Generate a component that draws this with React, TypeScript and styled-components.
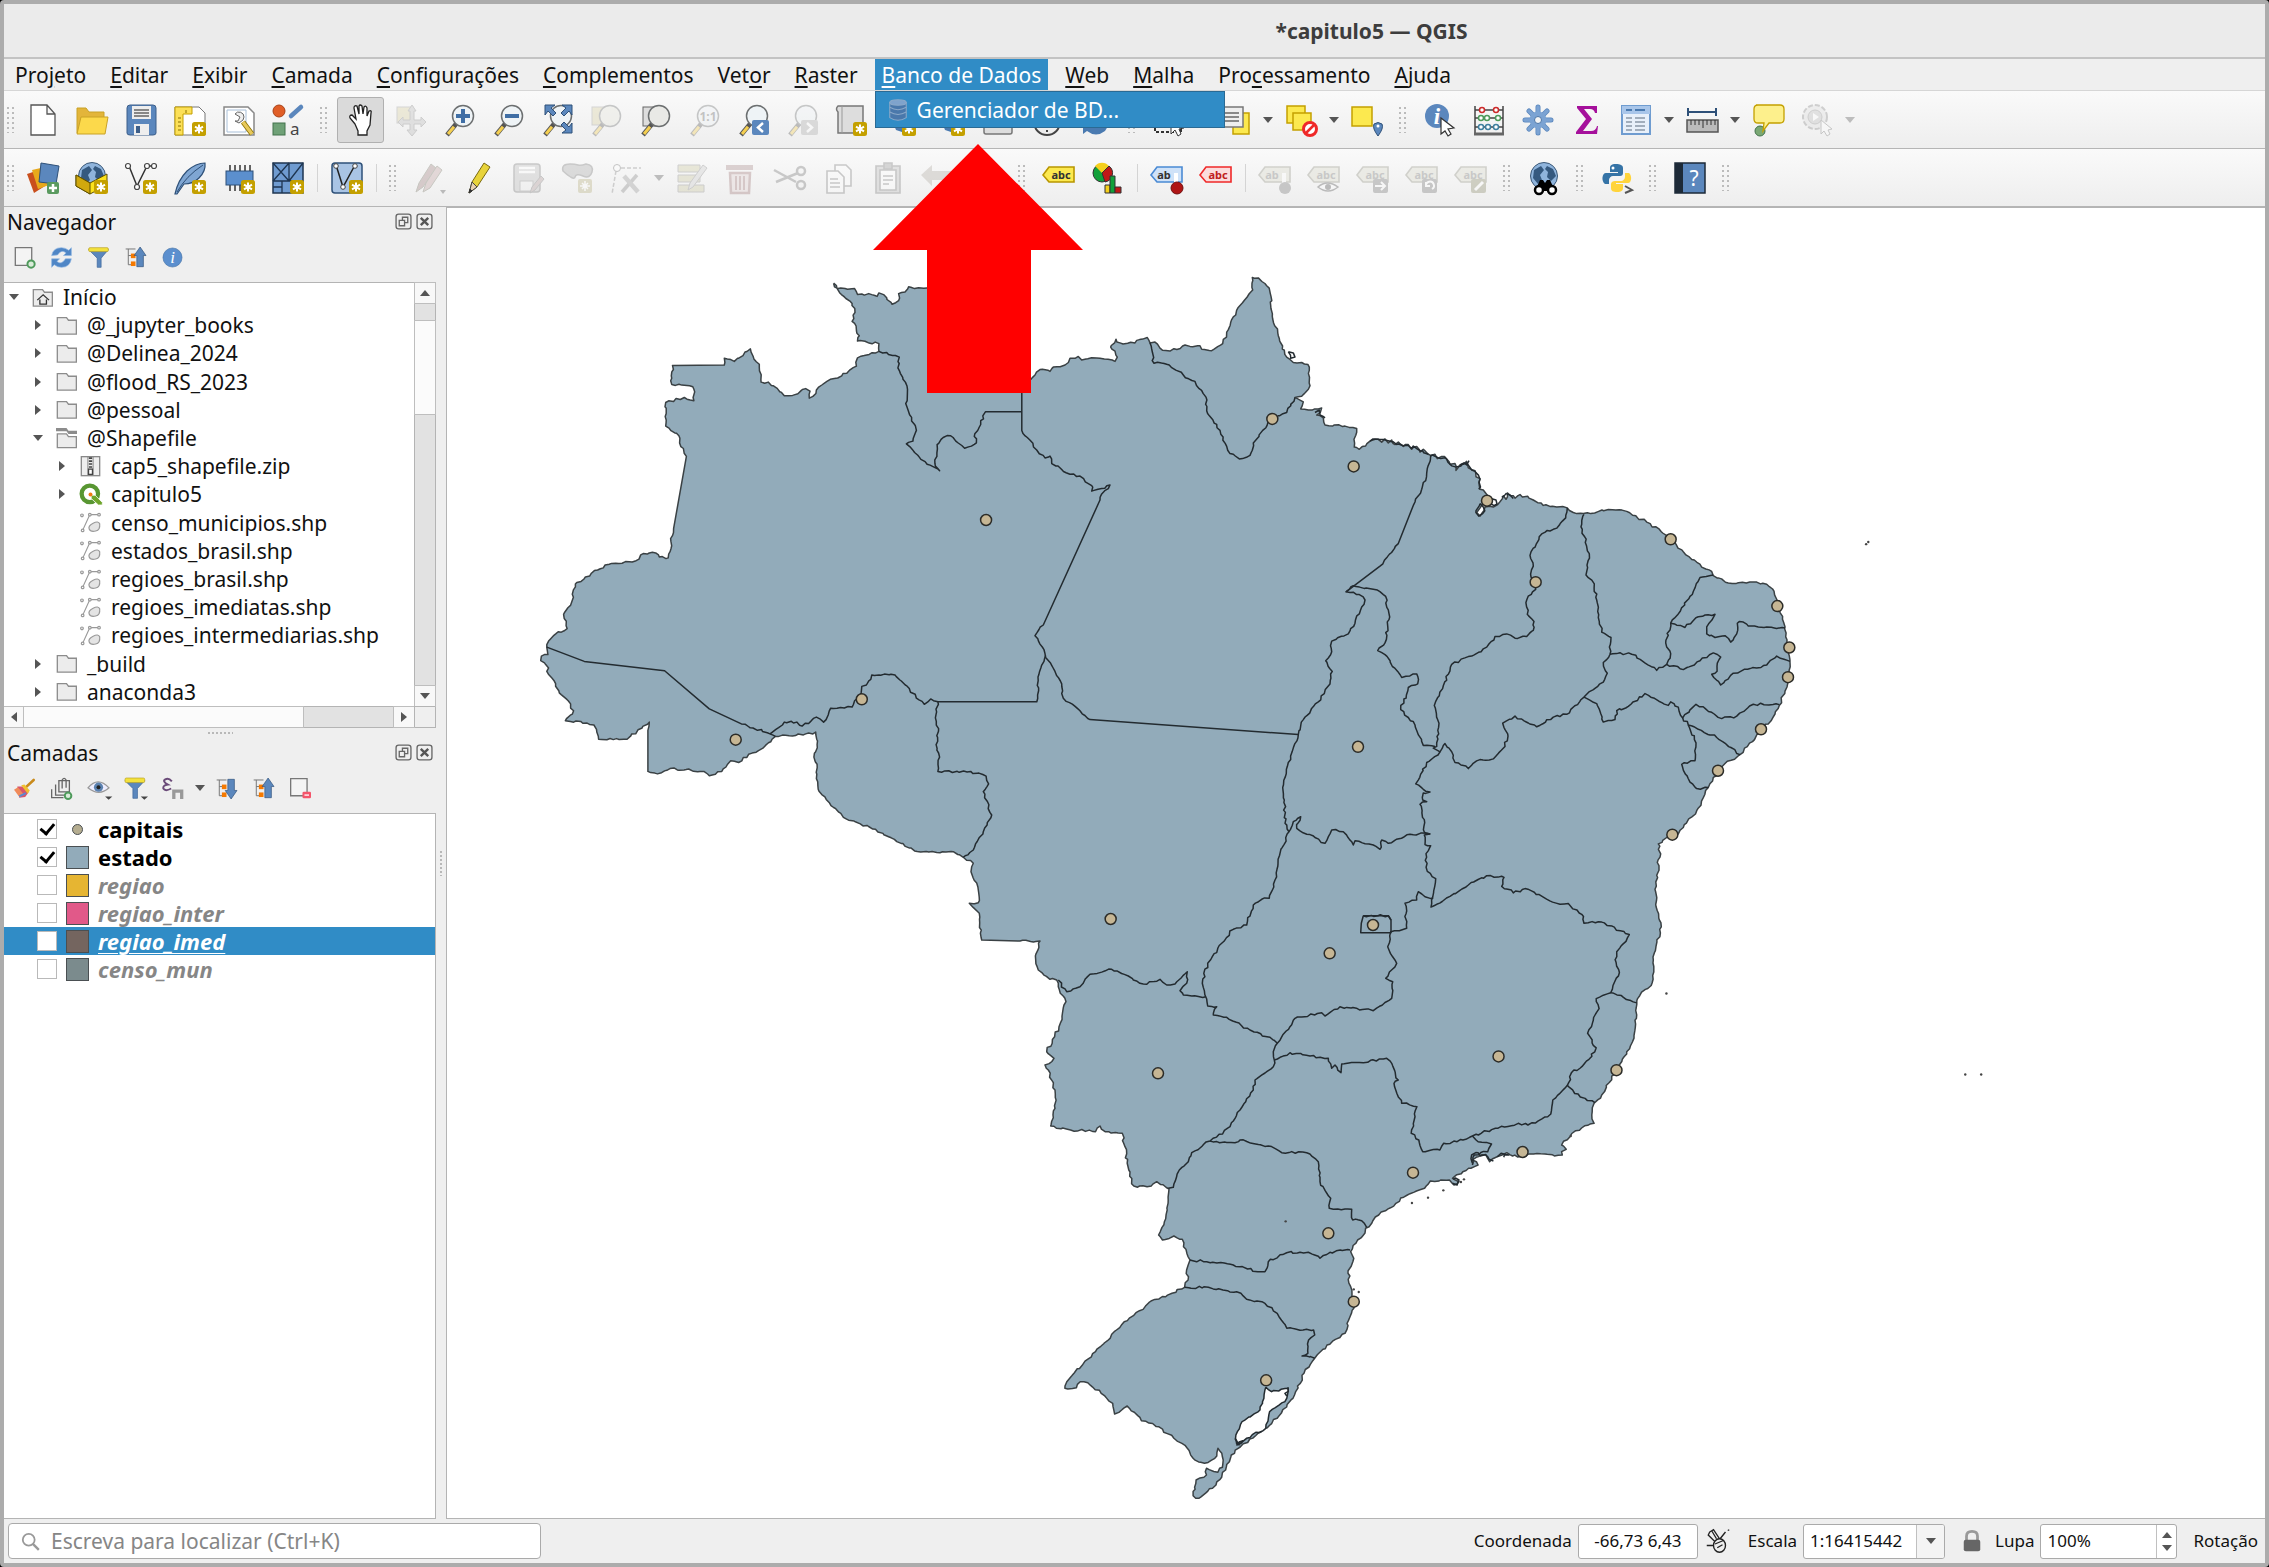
import React from "react";
import styled, { createGlobalStyle, css } from "styled-components";

const GlobalStyle = createGlobalStyle`
  * { box-sizing: border-box; }
  body { margin: 0; background: #000; }
  button, input, select { font: inherit; color: inherit; margin: 0; }
  button { border: 0; padding: 0; background: none; }
`;

/* ------------------------------------------------------------------ */
/* Map geometry: points are kept per survey sheet (origin and scale).  */
/* ------------------------------------------------------------------ */

type Pt = [number, number];
type Sheet = [number, number, number, number];

const A: Sheet = [520, 250, 2.8, 2.8];
const B: Sheet = [1020, 250, 3, 2.8];
const C: Sheet = [1400, 400, 3, 2.8];
const D: Sheet = [940, 780, 3, 3];
const E: Sheet = [1040, 1100, 2.6133, 3];
const F: Sheet = [0, 0, 0.691, 0.691];

const pts = (s: Sheet, text: string): Pt[] =>
  text
    .trim()
    .split(/\s+/)
    .map((pair) => {
      const [x, y] = pair.split(",").map(Number);
      return [s[0] + x / s[2], s[1] + y / s[3]];
    });

let seed = 7;
const random = () => {
  seed = (seed * 16807) % 2147483647;
  return seed / 2147483647 - 0.5;
};

/* Rivers and coasts are wavy, surveyed straight lines are long and stay straight. */
const roughen = (line: Pt[], amount: number): Pt[] => {
  const out: Pt[] = [line[0]];
  for (let i = 1; i < line.length; i++) {
    const [ax, ay] = line[i - 1];
    const [bx, by] = line[i];
    const len = Math.hypot(bx - ax, by - ay);
    if (len > 4 && len < 34) {
      const n = Math.round(len / 3.5);
      for (let k = 1; k < n; k++) {
        out.push([ax + ((bx - ax) * k) / n + random() * amount, ay + ((by - ay) * k) / n + random() * amount]);
      }
    }
    out.push([bx, by]);
  }
  return out;
};

const toPath = (line: Pt[], amount = 2.4) =>
  "M" + roughen(line, amount).map(([x, y]) => `${x.toFixed(1)} ${y.toFixed(1)}`).join("L");

const outline = toPath([
  ...pts(A, "878,93 890,108 937,108 945,125 985,125 1000,130 1005,120 1018,125 1042,152 1060,142 1060,122 1078,118 1088,103 1105,108 1139,106 1200,90 1280,60 1330,120 1400,250 1410,362"),
  ...pts(B, "33,362 45,350 60,335 90,340 100,328 135,322 150,303 175,298 185,308 240,303 285,312 292,300 285,283 272,272 288,250 300,260 345,260 350,253 382,245 390,260 405,258 420,275 450,283 495,266 510,270 540,268 545,278 575,282 608,262 620,230 635,195 660,155 698,112 697,77 715,78 740,100 753,130 757,185 775,240 800,300 820,315 845,315 868,328 870,380 850,405 825,413 850,425 842,445 895,445 905,442 890,462 910,470 915,490 975,493 1010,500 1002,530 1003,552 1018,558 1050,535 1075,530 1085,538 1095,529 1105,540 1115,532 1125,545 1135,538 1150,550 1165,545 1175,558 1190,550 1200,566 1210,558 1225,572"),
  ...pts(C, "92,155 105,152 112,164 125,158 140,165 150,180 165,178 168,197 180,182 200,172 205,190 225,198 228,215 240,220 240,250 250,252 265,270 245,295 230,315 240,325 255,300 280,300 300,285 310,268 318,278 322,260 345,275 360,265 400,280 430,295 470,300 502,302 520,315 550,318 625,307 680,312 740,342 800,380 850,425 905,468 935,480 940,492 985,512 1060,510 1100,516 1122,535 1135,575 1155,635 1165,690 1170,735 1165,775 1155,815 1138,855 1118,890 1083,925 1020,993 975,1018 955,1040 925,1085 890,1150 835,1215 800,1225 775,1243 780,1280 772,1295 777,1310 765,1370 772,1430 784,1475 768,1530 760,1568"),
  ...pts(F, "1142,674 1141,681 1133,688 1131,694 1130,710 1128,720 1121,732 1117,740 1112,748 1104,760"),
  ...pts(E, "1448,10 1442,45 1448,70 1400,92 1385,110 1363,135 1375,148 1363,155 1365,165 1290,162 1260,168 1235,168 1220,158 1200,168 1175,185 1165,165 1140,172 1130,180 1145,195 1120,205 1105,215 1078,235 1095,245 1082,255 1070,240 1020,243 1005,265 960,285 930,310 885,345 860,380 830,420 812,455 820,475 805,520 812,560 820,600 820,625 810,650 797,700 750,735 718,775 690,820 665,885 620,955 570,1000 518,1045 500,1065 485,1110 460,1155 415,1195 400,1187 408,1140 435,1125 435,1105 465,1117 478,1090 475,1060 465,1045 462,1068 430,1090 400,1075 385,1045 350,1015 310,980 265,962 228,918 195,942 190,910 160,880 125,848 105,845 95,863 65,865 70,845 90,818 145,755 200,690 220,665 260,632 290,603 345,580 378,562 387,540 383,510 392,480 375,440 372,418 350,408 320,420 310,405 325,365 335,300 337,267 305,245 280,260 245,258 232,210 222,140 215,100 170,95 157,78 145,95 80,90 28,78"),
  ...pts(D, "333,1035 345,985 345,930 325,870 315,855 342,835 320,815 357,740 378,665 355,620 350,600 330,598 295,570 287,540 300,483 240,483 125,480 118,400 88,370 115,368 115,330 93,275 100,250 70,232 40,215 0,218"),
  ...pts(F, "632,588 618,580 605,573 585,566 576,558"),
  ...pts(A, "845,1525 835,1510 830,1480 832,1440 823,1420 832,1385 828,1350 800,1355 715,1362 680,1395 640,1412 612,1435 590,1430 565,1460 530,1472 515,1460 465,1455 420,1452 385,1467 358,1460 358,1345 362,1322 300,1370 220,1370 215,1350 207,1330 170,1320 127,1318 150,1290 135,1262 110,1240 95,1205 75,1180 80,1170 58,1150 60,1137 78,1133 75,1112 80,1095 100,1075 132,1060 122,1020 145,985 155,935 200,905 250,880 325,870 345,850 380,848 390,860 415,862 430,780 466,578 447,540 445,520 408,493 408,427 460,413 487,422 487,390 475,380 425,377 427,323 572,322 572,303 600,312 645,277 655,305 670,320 675,370 695,370 740,408 770,405 800,388 812,395 810,415 820,410 845,378 880,360 915,345 942,325 945,302 1005,284 1005,262 945,255 950,240 930,200 938,175 930,150 900,125 878,93"),
]);

const borders = [
  pts(A, "75,1112 180,1152 405,1178 530,1285 620,1327 700,1355 715,1362"),
  pts(A, "700,1355 740,1322 775,1322 790,1333 830,1308 850,1322 870,1283 930,1280 937,1262 955,1240 957,1222 970,1218 985,1190 1050,1190 1090,1228 1110,1255 1132,1272 1150,1257 1170,1265 1447,1265 1455,1180 1472,1135"),
  [...pts(A, "1170,1265 1163,1310 1172,1340 1165,1385 1175,1420 1170,1460 1262,1460 1305,1473 1312,1495"), ...pts(D, "130,35 155,105 130,155 100,210 70,232")],
  pts(A, "1005,284 1062,300 1058,330 1085,390 1080,430 1110,505 1100,535 1082,543 1140,600 1175,618 1163,605 1168,545 1185,525 1205,520 1245,555 1278,540 1272,522 1303,453 1405,453"),
  [...pts(A, "1405,380 1405,505"), ...pts(B, "22,525 50,560 75,582 90,577 95,598 150,628 180,633 215,660 215,675 245,668 270,658 265,668 245,683 240,700 70,1050 45,1080 75,1130 105,1180 125,1215 130,1255 180,1290 210,1315 835,1357 850,1315 895,1265 930,1215 937,1180 917,1150 935,1125 935,1095 985,1075 1005,1045 1025,1000 1035,980 1018,965 978,957 1080,885 1135,822 1180,715 1205,670 1220,625 1232,575")],
  pts(B, "978,957 1000,940 1060,950 1097,970 1107,1035 1095,1100 1073,1122 1095,1133 1145,1197 1190,1187 1193,1215 1165,1225 1142,1287 1185,1330 1210,1387 1245,1390"),
  [...pts(B, "835,1357 805,1435 788,1505"), ...pts(D, "1033,60 1035,130 1047,155")],
  pts(B, "390,260 402,317 440,320 490,350 525,368 558,412 560,450 600,505 620,550 630,570 658,585 690,575 700,540 755,475 800,455 825,413"),
  pts(C, "502,302 497,330 460,362 425,375 390,435 400,465 393,495 407,530 380,560 382,600 402,620 400,645 380,662 345,667 320,655 285,662 260,692 215,717 155,740 130,800 103,855 117,905 110,970 100,975 120,985 135,962 155,985 165,1015 205,1032 240,1007 280,1005 315,970 323,935 308,905 345,885 410,915 460,888 500,880 552,832 610,790 622,765 610,735 630,712 633,665 605,650 590,560 583,515 558,490 568,430 543,355 552,320"),
  pts(C, "630,712 650,710 695,712 770,757 800,740 812,710 797,680 812,625 870,550 900,497 940,490"),
  pts(C, "812,625 855,637 895,607 945,600 920,635 920,655 945,665 975,660 992,678 1010,655 1012,625 1030,622 1045,633 1100,636 1155,638"),
  pts(C, "800,740 850,755 900,730 940,708 962,720 945,765 935,768 962,798 1000,765 1050,752 1100,742 1130,717 1170,732"),
  pts(C, "552,832 590,850 610,902 645,895 650,870 685,858 735,822 805,855 812,845 835,860 848,890 888,852 965,892 1010,885 1060,852 1138,853"),
  pts(C, "848,890 865,910 950,945 1020,993"),
  pts(C, "865,910 888,960 885,1010 845,1020 870,1070 890,1088 925,1085"),
  pts(C, "120,985 80,1015 47,1075 70,1090 90,1098 70,1100 68,1120 80,1125 60,1132 73,1175 73,1210 90,1215 73,1218 75,1245 92,1248 78,1270 82,1320 107,1340 98,1392 93,1420 110,1412 150,1390 205,1358 260,1332 312,1337 305,1362 340,1380 375,1368 430,1392 480,1412 505,1410 545,1440 552,1465 605,1462 688,1497 650,1545 645,1568"),
  pts(F, "1116,663 1119,672 1113,686 1131,693"),
  pts(F, "1113,686 1103,690 1105,697 1101,705 1097,714 1103,724 1098,732 1092,738 1086,741 1083,750 1092,758 1102,762"),
  [...pts(F, "1083,750"), ...pts(E, "1340,0 1335,42 1275,75 1250,70 1190,85 1130,108 1090,125 1055,130 1045,150 1000,155 990,120 970,100 978,60 985,20 945,10"), ...pts(D, "1362,910 1375,900 1355,850 1340,835 1270,848 1205,852 1203,878 1185,855 1175,865 1165,835 1110,828 1050,818 1003,840")],
  pts(E, "1130,108 1145,125 1180,132 1170,155 1135,165 1130,195"),
  pts(D, "1003,840 1000,815 1012,790 990,772 930,750 860,712 820,705 830,680 803,678 797,650 730,645 720,632 740,610 742,575 705,612 680,615 660,598 610,612 565,588 515,568 450,583 420,620 380,635 355,600"),
  pts(D, "1003,840 1000,860 945,900 940,930 900,990 870,1040 810,1083 755,1118 745,1145 718,1170 700,1222 685,1225"),
  pts(D, "810,1083 885,1088 900,1080 985,1098 1025,1118 1100,1118 1135,1145 1140,1205 1172,1255 1168,1285 1235,1288 1238,1320 1265,1322 1280,1342"),
  pts(D, "750,1440 800,1445 880,1455 960,1475 975,1475 985,1445 1040,1418 1105,1417 1140,1435 1170,1417 1230,1410"),
  pts(E, "378,562 440,562 525,580 540,598 580,605 620,640 645,685 715,690 718,705 702,720 700,760 685,768 718,775"),
  pts(D, "797,650 787,610 803,550 845,490 880,448 920,435 940,375 965,358 988,355 1005,300 1020,220 1047,155 1060,125 1082,110 1070,145 1155,190 1175,150 1210,155 1235,185 1240,195 1245,182 1300,195 1320,208 1325,180 1345,190 1410,163 1470,162"),
  pts(D, "1012,790 1050,740 1065,715 1145,698 1155,708 1200,680 1300,692 1355,655 1358,605 1337,595 1370,550 1343,500 1352,455 1400,445 1395,370 1430,360 1435,335 1455,350 1480,355"),
  pts(D, "1353,420 1345,407 1270,407"),
].map((line) => toPath(line));

const federalDistrict = toPath(pts(D, "1270,407 1345,407 1353,420 1353,458 1262,458 1264,430 1270,407"), 0);

/* Mangrove coasts and bays, drawn a second time so that they read as dense. */
const mangroves = [
  pts(B, "1050,535 1075,530 1115,537 1150,548 1190,556 1225,572"),
  pts(C, "92,156 140,166 168,188 200,176 225,200 240,222 236,250"),
  pts(C, "180,182 192,176 200,182 207,170"),
  pts(C, "240,290 228,310 236,325 248,318 250,300 240,290"),
  pts(C, "272,276 288,280 282,296 272,290"),
  pts(C, "305,272 318,262 330,266 340,276"),
  pts(B, "885,455 898,448 900,462 915,470"),
  pts(B, "805,285 820,288 825,300 812,303 805,285"),
  pts(E, "1130,190 1128,165 1145,158 1170,170 1185,183"),
  pts(E, "1195,170 1205,160 1225,165 1212,172"),
  pts(E, "1080,238 1095,240 1090,255 1078,250"),
  pts(E, "648,862 640,880 645,888"),
  pts(E, "510,1015 520,1035 530,1022 512,1030"),
].map((line) => toPath(line, 4));

const lagoon = toPath(pts(E, "590,862 605,875 630,868 648,865 640,905 600,935 590,985 540,1015 515,1035 512,1005 528,965 575,930 585,895 590,862"));

const capitals: Pt[] = [
  ...pts(A, "1305,756 957,1258 604,1371"),
  ...pts(B, "757,473 1001,606 1014,1391"),
  ...pts(C, "261,282 812,390 407,510 1132,577 1168,693 1164,776 1083,922 954,1038 817,1217"),
  ...pts(D, "512,417 1299,435 1169,520 654,880 1419,1178 1165,1360"),
  ...pts(E, "1261,156 820,605 591,841"),
  ...pts(F, "1035.5,730 1117,739.5"),
];

const islets: Pt[] = [
  ...pts(F, "1289.5,376 1291,374.5 1151.5,686.5 1358,742.5 1369,742.5"),
  ...pts(E, "972,309 1054,271 1014,293 1108,238 1100,246 642,364 833,576 820,568 1387,108"),
];

/* ------------------------------------------------------------------ */
/* Icons                                                               */
/* ------------------------------------------------------------------ */

const Badge = () => (
  <g>
    <rect x="18" y="18" width="14" height="14" rx="2.5" fill="#c4a000" />
    <path d="M25 20.5v9M21 22.7l8 4.6M29 22.7l-8 4.6" stroke="#fff" strokeWidth="2" />
  </g>
);

const Lens = ({ fill = "#eef3f6" }: { fill?: string }) => (
  <g>
    <path d="M4 31L13 20" stroke="#555" strokeWidth="4.6" />
    <path d="M5 30L11 22.700" stroke="#f5cf50" strokeWidth="3" />
    <circle cx="20" cy="12" r="10.500" fill={fill} stroke="#6c6f70" strokeWidth="1.5" />
  </g>
);

const Folder = () => (
  <path d="M2 4v25h29V8H19l-3-4z" fill="#ececec" stroke="#8c8c8c" strokeWidth="2" />
);

const Tag = ({ fill, stroke, color, text = "abc" }: { fill: string; stroke: string; color: string; text?: string }) => (
  <g>
    <path d="M0 13l6-8h25v15H6z" fill={fill} stroke={stroke} strokeWidth="1.600" />
    <text x={text === "ab" ? 13 : 18} y="17" fontFamily="Noto Sans, sans-serif" fontSize="11" fontWeight="700" textAnchor="middle" fill={color}>
      {text}
    </text>
  </g>
);

const GreyTag = ({ children, text }: { children: React.ReactNode; text?: string }) => (
  <g>
    <Tag fill="#d8d8c8" stroke="#8e8e80" color="#777" text={text} />
    {children}
  </g>
);

const Squares = () => (
  <g fill="#fce94f" stroke="#c4a000" strokeWidth="1.500">
    <rect x="2" y="2" width="18" height="17" />
    <rect x="8" y="9" width="18" height="17" />
  </g>
);

const TreeLines = () => (
  <g>
    <path d="M1 3h15M5 3v24h6M5 13h6" stroke="#777" strokeWidth="1.500" fill="none" />
    <rect x="9" y="10" width="7" height="7" fill="#f57900" />
    <rect x="9" y="22" width="7" height="7" fill="#f57900" />
  </g>
);

const Globe = () => (
  <g>
    <circle cx="16" cy="14" r="13.500" fill="#8fb4dc" stroke="#3b5877" />
    <path d="M6 8l7-4 3 4-4 5 2 5-4 4-5-6zM19 4l6 3 3 7-5 5-4-4 1-5-3-3z" fill="#35597f" />
  </g>
);

const ICONS: Record<string, React.ReactNode> = {
  doc: <path d="M4 1h16l8 9v21H4zM20 1v9h8" fill="#fff" stroke="#555" strokeWidth="1.300" />,
  open: (
    <g stroke="#c9a227" strokeWidth="1">
      <path d="M1 29V4h9l3 4h15v21z" fill="#e3b53a" />
      <path d="M1 30l4-17h27l-3 17z" fill="#fcd94b" />
    </g>
  ),
  save: (
    <g>
      <path d="M2 4q0-3 3-3h23q3 0 3 3v25q0 2-3 2H5q-3 0-3-2z" fill="#5b87bd" stroke="#3d5f8a" />
      <rect x="7" y="2" width="19" height="13" fill="#eee" />
      <path d="M9 6h15M9 9h15M9 12h15" stroke="#666" strokeWidth="1.300" />
      <rect x="9" y="20" width="15" height="11" fill="#eee" />
      <rect x="11" y="22" width="4" height="7" fill="#3d5f8a" />
    </g>
  ),
  layout: (
    <g>
      <path d="M1 3h24l6 6v22H1z" fill="#fff" stroke="#777" />
      <path d="M1 3h17v7H9v21H1z" fill="#fce058" stroke="#c4a000" />
      <path d="M4 14h3M4 18h3M4 22h3M4 26h3M12 6v3" stroke="#8a7000" />
      <Badge />
    </g>
  ),
  wrench: (
    <g>
      <path d="M1 3h24l6 6v22H1z" fill="#fff" stroke="#888" strokeWidth="1.500" />
      <path d="M4 6h19v22H4z" fill="none" stroke="#a8bfd8" />
      <path d="M12 10a5 5 0 0 1 9 3l-1 3-4 3-4-2 3 0 2-4z" fill="#eee" stroke="#666" />
      <path d="M20 18l9 12" stroke="#8a7000" strokeWidth="5" />
      <path d="M20 18l9 12" stroke="#e8c95a" strokeWidth="3.500" />
    </g>
  ),
  style: (
    <g>
      <circle cx="7" cy="7" r="6" fill="#e05e27" stroke="#a84218" />
      <path d="M19 12L29 3" stroke="#5b87bd" strokeWidth="4.500" strokeLinecap="round" />
      <rect x="1" y="19" width="12" height="12" fill="#6fa177" stroke="#43734c" />
      <text x="18" y="31" fontFamily="Noto Sans, sans-serif" fontSize="17" fill="#444">a</text>
    </g>
  ),
  hand: (
    <path d="M10 20L5 14q-1-3 2-3l4 4L9 4q0-3 3-2l2 8V2q1-2 3 0l1 8 1-7q2-2 3 1v8l2-5q3-1 2 2l-1 12-3 6v4H13v-4z" fill="#fff" stroke="#222" strokeWidth="1.300" />
  ),
  move: (
    <g>
      <rect x="3" y="3" width="16" height="16" fill="#d8d0a0" stroke="#999" />
      <path d="M18 1l4 6h-2v9h7v-3l5 5-5 5v-3h-7v6h3l-5 6-5-6h3v-6H9v3l-5-5 5-5v3h7V7h-2z" fill="#bbb" stroke="#888" />
    </g>
  ),
  zoomin: <g><Lens /><path d="M20 5v14M13 12h14" stroke="#3f6ea5" strokeWidth="4" /></g>,
  zoomout: <g><Lens /><path d="M13 12h14" stroke="#3f6ea5" strokeWidth="4" /></g>,
  zoomfull: (
    <g>
      <Lens />
      <path d="M4 1h10l-4 3 5 5-3 3-5-5-3 4zM31 1v10l-3-4-5 5-3-3 5-5-4-3zM31 29H21l4-3-5-5 3-3 5 5 3-4z" fill="#5b87bd" stroke="#2e5078" />
    </g>
  ),
  zoomsel: <g><rect x="2" y="3" width="16" height="18" fill="#d8d0a0" stroke="#999" /><Lens fill="#e6e6dc" /></g>,
  zoomlayer: <g><rect x="4" y="3" width="16" height="19" fill="#ddd" stroke="#666" /><Lens fill="#e9e9e6" /></g>,
  zoom11: (
    <g>
      <Lens />
      <text x="20" y="17" fontFamily="Noto Sans, sans-serif" fontSize="12" fontWeight="700" textAnchor="middle" fill="#666">1:1</text>
    </g>
  ),
  zoomlast: <g><Lens /><rect x="15" y="16" width="17" height="15" rx="2" fill="#5b87bd" /><path d="M26 19l-5 4.500 5 4.500" stroke="#fff" strokeWidth="2.500" fill="none" /></g>,
  zoomnext: <g><Lens /><rect x="15" y="16" width="17" height="15" rx="2" fill="#aaa" /><path d="M21 19l5 4.500-5 4.500" stroke="#fff" strokeWidth="2.500" fill="none" /></g>,
  mapview: <g><path d="M3 2q-3 3 0 6v21h25V2z" fill="#ddd" stroke="#777" strokeWidth="1.500" /><path d="M7 2v27" stroke="#999" /><Badge /></g>,
  bookmark: <g><path d="M4 6h22v10l-8 12-6-2z" fill="#4a7ab0" /><Badge /></g>,
  panel: <rect x="2" y="4" width="28" height="26" rx="2" fill="#ddd" stroke="#777" strokeWidth="1.500" />,
  clock: <g><circle cx="16" cy="18" r="13" fill="#eee" stroke="#444" strokeWidth="2" /><path d="M16 18v10" stroke="#444" strokeWidth="2" strokeDasharray="2 2" /></g>,
  refresh: <path d="M3 16v14l4-3q9 7 18 0l5-8H14z" fill="#4a7ab0" />,
  select: <g><path d="M2 6h26v22H2z" fill="none" stroke="#333" strokeWidth="2" strokeDasharray="3 2" /><path d="M18 12v18l4-4 3 6 3-2-2-5 5-1z" fill="#fff" stroke="#333" /></g>,
  form: (
    <g>
      <rect x="14" y="9" width="16" height="21" fill="#fce94f" stroke="#c4a000" strokeWidth="1.500" />
      <rect x="2" y="3" width="22" height="20" fill="#eee" stroke="#777" strokeWidth="1.500" />
      <path d="M6 9h14M6 13h14M6 17h14" stroke="#888" strokeWidth="2" />
    </g>
  ),
  deselect: <g><Squares /><circle cx="25" cy="25" r="6.500" fill="#fff" stroke="#ef2929" strokeWidth="3" /><path d="M21 29l8-8" stroke="#ef2929" strokeWidth="2.500" /></g>,
  selpin: <g><rect x="1" y="3" width="20" height="19" fill="#fce94f" stroke="#c4a000" strokeWidth="1.500" /><path d="M27 32q-6-8-4-12 4-3 8 0 2 4-4 12z" fill="#5b87bd" stroke="#2e5078" /><circle cx="27" cy="22" r="1.500" fill="#fff" /></g>,
  info: (
    <g>
      <circle cx="13" cy="12" r="12" fill="#5b87bd" />
      <text x="13" y="20" fontFamily="Liberation Serif, serif" fontSize="23" fontStyle="italic" fontWeight="700" textAnchor="middle" fill="#fff">i</text>
      <path d="M17 14v16l4-3 3 5 3-2-3-5 6-1z" fill="#fff" stroke="#333" strokeWidth="1.200" />
    </g>
  ),
  abacus: (
    <g>
      <path d="M2 2v28h28V2M2 6h28M2 14h28M2 23h28" fill="none" stroke="#444" strokeWidth="1.500" />
      <path d="M1 30h30" stroke="#666" strokeWidth="3" />
      <g strokeWidth="1.500" fill="#fff">
        <g stroke="#cc2b2b"><circle cx="9" cy="6" r="2.500" /><circle cx="23" cy="6" r="2.500" /></g>
        <g stroke="#4e9a5b"><circle cx="8" cy="14" r="2.500" /><circle cx="14" cy="14" r="2.500" /><circle cx="25" cy="14" r="2.500" /></g>
        <g stroke="#3f7f9f"><circle cx="8" cy="23" r="2.500" /><circle cx="15" cy="23" r="2.500" /><circle cx="23" cy="23" r="2.500" /></g>
      </g>
    </g>
  ),
  gear: (
    <g>
      <path d="M16 3v26M3 16h26M7 7l18 18M25 7L7 25" stroke="#5b87bd" strokeWidth="5" strokeLinecap="round" />
      <path d="M16 3v26M3 16h26M7 7l18 18M25 7L7 25" stroke="#7ba3d3" strokeWidth="3.500" strokeLinecap="round" />
      <circle cx="16" cy="16" r="8.500" fill="#7ba3d3" />
      <circle cx="16" cy="16" r="3.500" fill="#f4f4f4" stroke="#4a75a8" />
    </g>
  ),
  sigma: <path d="M6 2h20v7h-2q-1-4-5-4h-6l8 10-9 12h8q5 0 6-5h1l-1 8H5v-2l10-13L6 4z" fill="#a5109b" />,
  table: (
    <g>
      <rect x="2" y="2" width="28" height="28" fill="#e8f0fa" stroke="#6f9cd0" strokeWidth="2" />
      <rect x="2" y="2" width="28" height="8" fill="#a9c6ea" />
      <path d="M6 6h6M15 6h10" stroke="#4a7ab0" strokeWidth="2" />
      <path d="M6 14h6M15 14h10M6 18h6M15 18h10M6 22h6M15 22h10M6 26h6M15 26h10" stroke="#8a98a8" strokeWidth="1.500" />
    </g>
  ),
  ruler: (
    <g>
      <path d="M2 8h28M2 4v8M30 4v8" stroke="#2e5078" strokeWidth="2" />
      <rect x="1" y="16" width="31" height="12" fill="#bbb" stroke="#555" strokeWidth="1.500" />
      <path d="M5 16v5M9 16v5M13 16v5M17 16v8M21 16v5M25 16v5M29 16v5" stroke="#333" />
    </g>
  ),
  tip: (
    <g>
      <circle cx="8" cy="27" r="5" fill="#7aa874" stroke="#43734c" />
      <path d="M4 1h24q4 0 4 4v10q0 4-4 4H17l-6 8 1-8H6q-4 0-4-4V5q0-4 4-4z" fill="#fdf08c" stroke="#c4a000" strokeWidth="1.300" />
    </g>
  ),
  action: (
    <g>
      <circle cx="14" cy="13" r="12" fill="#ddd" stroke="#888" strokeWidth="2" strokeDasharray="5 2" />
      <circle cx="14" cy="13" r="7" fill="#bbb" stroke="#888" />
      <path d="M12 9l6 4-6 4z" fill="#fff" />
      <path d="M20 16v14l3-3 3 5 3-2-2-4 4-1z" fill="#fff" stroke="#777" />
    </g>
  ),
  layers: (
    <g>
      <path d="M0 12l12-4 6 16-11 7z" fill="#c94f1d" />
      <path d="M5 8l13-3 4 18-11 4z" fill="#e8a91c" />
      <path d="M14 1l18 3-3 18-17-2z" fill="#5b87bd" stroke="#2e5078" />
      <rect x="20" y="20" width="12" height="12" rx="2" fill="#5a9a5f" />
      <path d="M26 22v8M22 26h8" stroke="#fff" strokeWidth="2.500" />
    </g>
  ),
  geopkg: (
    <g>
      <Globe />
      <path d="M0 13l14 8 17-9v11L14 32 0 24z" fill="#fce21c" stroke="#5f5000" />
      <path d="M0 13l14 8v11L0 24z" fill="#d0a80e" stroke="#5f5000" />
      <Badge />
    </g>
  ),
  vector: (
    <g>
      <path d="M4 4l8 20L22 4h8" fill="none" stroke="#333" strokeWidth="1.500" />
      <g fill="#fff" stroke="#444" strokeWidth="1.200"><circle cx="3" cy="4" r="2.500" /><circle cx="12" cy="25" r="2.500" /><circle cx="22" cy="4" r="2.500" /><circle cx="29" cy="4" r="2.500" /></g>
      <Badge />
    </g>
  ),
  feather: <g><path d="M1 32q3-14 12-23Q22 1 31 1q1 8-6 15-6 6-15 6l-7 10z" fill="#7fa6d3" stroke="#2e5078" strokeWidth="1.200" /><path d="M3 30Q12 14 29 3" stroke="#2e5078" fill="none" /><Badge /></g>,
  chip: <g><path d="M7 3v26M12 3v26M17 3v26M22 3v26M27 3v26" stroke="#333" strokeWidth="1.500" /><rect x="3" y="9" width="27" height="14" fill="#5b8fce" stroke="#2e5078" /><Badge /></g>,
  mesh: <g><rect x="1" y="1" width="30" height="30" fill="#6f9bd0" stroke="#1e3550" strokeWidth="1.500" /><path d="M1 19h30M17 1v18M17 1L1 19M1 1l16 18M31 1L17 19M10 19v12M1 25h9" stroke="#1e3550" strokeWidth="1.300" fill="none" /><Badge /></g>,
  vmesh: (
    <g>
      <rect x="1" y="1" width="30" height="30" rx="3" fill="#a9c4e4" stroke="#2e5078" strokeWidth="1.500" />
      <path d="M5 3l7 22L24 3" fill="none" stroke="#222" strokeWidth="1.500" />
      <g fill="#fff" stroke="#444"><circle cx="5" cy="4" r="2.300" /><circle cx="12" cy="25" r="2.300" /><circle cx="24" cy="4" r="2.300" /></g>
      <Badge />
    </g>
  ),
  pencils: <g><path d="M2 30l3-9L17 2l5 4L9 25z" fill="#a08080" stroke="#776" /><path d="M9 30l3-9L23 4l5 4L16 26z" fill="#c0a0a0" stroke="#776" /><path d="M26 28h6l-3 4z" fill="#555" /></g>,
  pencil: <g><path d="M6 31l3-11L21 1l6 4-13 20z" fill="#e8d33a" stroke="#7a6a10" /><path d="M6 31l3-11 5 5z" fill="#e8d0b0" stroke="#444" /><path d="M6 31l1-4 2 2z" stroke="#333" fill="#333" /></g>,
  saveedit: <g><rect x="2" y="2" width="26" height="28" rx="3" fill="#bbb" stroke="#777" strokeWidth="1.500" /><path d="M7 6h16M7 10h16" stroke="#fff" strokeWidth="2.500" /><rect x="8" y="19" width="13" height="10" fill="#eee" stroke="#888" /><path d="M18 31l2-6 9-11 3 3-9 11z" fill="#b09a9a" stroke="#777" /></g>,
  blob: <g><path d="M2 9q-2-7 7-7 5 0 8 1t8-1q8 1 6 8t-9 4-8 1-12-6z" fill="#aaa" stroke="#777" strokeWidth="1.500" /><rect x="17" y="17" width="14" height="14" rx="2" fill="#b8b080" /><path d="M24 19v10M19 24h10M21 21l6 6M27 21l-6 6" stroke="#fff" strokeWidth="1.500" /></g>,
  vertex: <g><path d="M6 9L2 32M11 6h20" stroke="#888" strokeWidth="1.500" strokeDasharray="4 2" /><circle cx="7" cy="6" r="3.500" fill="#fff" stroke="#666" /><path d="M12 30L27 13" stroke="#888" strokeWidth="3.500" /><path d="M14 14l14 16" stroke="#999" strokeWidth="4.500" /></g>,
  multiedit: <g><path d="M2 3h22v7H2zM2 13h22v7H2zM2 23h26v7H2z" fill="#ccc9a0" stroke="#888" /><path d="M12 28l2-7L27 3l4 3-14 19z" fill="#ccc" stroke="#888" /></g>,
  trash: <g><path d="M1 3h27v5H1z" fill="#a98a8a" /><path d="M5 11h20l-1 20H6z" fill="#e0d0d0" stroke="#a07878" strokeWidth="2.500" /><path d="M11 14v14M15 14v14M19 14v14" stroke="#a07878" strokeWidth="2" /></g>,
  cut: <g><path d="M0 8l22 12M2 20L24 11" stroke="#777" strokeWidth="2.500" /><circle cx="27" cy="9" r="4" fill="none" stroke="#777" strokeWidth="2.500" /><circle cx="27" cy="23" r="4" fill="none" stroke="#777" strokeWidth="2.500" /></g>,
  copy: <g fill="#fff" stroke="#777" strokeWidth="1.600"><path d="M12 3h11l5 5v16H12z" /><path d="M4 9h11l6 6v16H4z" /><path d="M7 17h8M7 21h10M7 25h10" /></g>,
  paste: <g stroke="#777" strokeWidth="1.600"><path d="M4 4h24v27H4z" fill="#bbb" /><path d="M8 8h16v20H8z" fill="#fff" /><path d="M12 1h8v6h-8zM11 14h10M11 18h10M11 22h6" fill="#999" /></g>,
  undo: <path d="M0 13L11 3v6h20v9H11v6z" fill="#b0a8a0" />,
  none: null,
  label: <Tag fill="#fce94f" stroke="#b89600" color="#333" />,
  diagram: (
    <g>
      <circle cx="10" cy="11" r="9" fill="#12a03a" stroke="#333" />
      <path d="M10 11L3 4a9 9 0 0 1 14 0z" fill="#f5cf1c" />
      <path d="M10 11l7-7a9 9 0 0 1-4 16z" fill="#c01818" stroke="#333" />
      <g stroke="#333"><path d="M13 23h5v8h-5z" fill="#f5cf1c" /><path d="M18 14h5v17h-5z" fill="#12a03a" /><path d="M23 25h6v6h-6z" fill="#c01818" /></g>
    </g>
  ),
  labelpin: <g><Tag fill="#cfe2f8" stroke="#4a8ad4" color="#333" text="ab" /><path d="M25 11v10" stroke="#fff" strokeWidth="4" /><circle cx="26" cy="26" r="6" fill="#b01515" stroke="#701010" /></g>,
  labelred: <Tag fill="#fbdcdc" stroke="#ef2929" color="#c02020" />,
  g1: <GreyTag text="ab"><path d="M25 11v10" stroke="#fff" strokeWidth="4" /><circle cx="26" cy="26" r="6" fill="#777" /></GreyTag>,
  g2: <GreyTag><path d="M10 25q9-8 20 0-10 8-20 0z" fill="#fff" stroke="#555" strokeWidth="1.500" /><circle cx="20" cy="25" r="3" fill="#555" /></GreyTag>,
  g3: <GreyTag><rect x="16" y="17" width="15" height="14" rx="2" fill="#777" /><path d="M18 24h9M24 20l4 4-4 4" stroke="#fff" strokeWidth="2" fill="none" /></GreyTag>,
  g4: <GreyTag><rect x="16" y="17" width="15" height="14" rx="2" fill="#777" /><path d="M20 24a4 4 0 1 1 6 3M20 20v4h4" stroke="#fff" strokeWidth="2" fill="none" /></GreyTag>,
  g5: <GreyTag><rect x="16" y="17" width="15" height="14" rx="2" fill="#8a8a6a" /><path d="M20 28l8-8" stroke="#fff" strokeWidth="3" /></GreyTag>,
  metasearch: (
    <g>
      <Globe />
      <path d="M7 29l5-11h3l2 3 2-3h3l5 11z" fill="#000" />
      <circle cx="11" cy="28" r="4" fill="#fff" stroke="#000" strokeWidth="2.500" />
      <circle cx="24" cy="28" r="4" fill="#fff" stroke="#000" strokeWidth="2.500" />
    </g>
  ),
  python: (
    <g>
      <path d="M15 2c-5 0-6 2-6 4v4h8v1H5c-4 0-5 8-1 11h4v-4c0-2 2-4 4-4h7c2 0 3-1 3-3V6c0-3-3-4-7-4z" fill="#3573a6" />
      <path d="M16 30c5 0 6-2 6-4v-4h-7v-1h12c4 0 4-8 1-10h-4v4c0 2-2 4-4 4h-6c-2 0-4 1-4 3v4c0 3 2 4 6 4z" fill="#ffd43b" />
      <circle cx="12" cy="6" r="1.500" fill="#fff" />
      <path d="M24 24l7 4-7 3" fill="none" stroke="#555" strokeWidth="2" />
    </g>
  ),
  help: (
    <g>
      <rect x="1" y="1" width="30" height="30" fill="#5b87bd" stroke="#1d2a38" strokeWidth="1.500" />
      <rect x="1" y="1" width="8" height="30" fill="#1d2a38" />
      <text x="20" y="24" fontFamily="Noto Sans, sans-serif" fontSize="21" textAnchor="middle" fill="#fff">?</text>
    </g>
  ),
  addlayer: <g><path d="M2 1h25v27H2z" fill="#f4f4f4" stroke="#777" strokeWidth="2" /><circle cx="26" cy="26" r="5.500" fill="#d9ecd9" stroke="#4e9a5b" strokeWidth="3" /></g>,
  sync: <path d="M1 13Q3 1 16 1q6 0 11 4l4-4v12H19l4-4q-7-6-13 3zM31 18q-2 13-15 13-6 0-11-4l-4 4V18h12l-4 4q7 6 13-4z" fill="#4f86c6" stroke="#8db4e2" />,
  funnel: <g><path d="M1 4h30L20 17v14h-6V17z" fill="#5b87bd" stroke="#3a6498" /><rect x="1" y="1" width="30" height="6" rx="2" fill="#f3e13c" stroke="#b89f20" /></g>,
  funnelmenu: <g><path d="M0 4h30L19 16v15h-7V16z" fill="#5b87bd" stroke="#3a6498" /><rect x="0" y="0" width="30" height="7" rx="2" fill="#f3e13c" stroke="#b89f20" /><path d="M24 28h11l-5.500 5z" fill="#444" /></g>,
  collapse: <g><TreeLines /><path d="M18 30V13h-4l9-13 9 13h-4v17z" fill="#5b87bd" stroke="#2e5078" /></g>,
  expand: <g><TreeLines /><path d="M18 2v17h-4l9 13 9-13h-4V2z" fill="#5b87bd" stroke="#2e5078" /></g>,
  infosm: (
    <g>
      <circle cx="16" cy="16" r="14.500" fill="#5b8fce" stroke="#4a75a8" />
      <text x="16" y="25" fontFamily="Liberation Serif, serif" fontSize="26" fontStyle="italic" textAnchor="middle" fill="#fff">i</text>
    </g>
  ),
  brush: <g><path d="M17 15L30 3" stroke="#c98a1b" strokeWidth="4" strokeLinecap="round" /><path d="M5 13l8 0 9 9-5 7L8 30z" fill="#d8556a" /><path d="M11 11l5-1 8 9-3 5z" fill="#f0c030" /><path d="M0 18l6-4 8 10-5 6z" fill="#f08a5a" /><path d="M8 28l10-5" stroke="#5b87d0" strokeWidth="3" /></g>,
  group: <g fill="none" stroke="#666" strokeWidth="2"><path d="M1 17v13h18M7 10v16h14M12 4h16v17H12zM17 16V3q3-5 6 0v12" /><circle cx="26" cy="27" r="5" fill="#d9ecd9" stroke="#4e9a5b" strokeWidth="3" /></g>,
  eye: <g><path d="M0 15Q15-3 32 15 17 29 0 15z" fill="#eef" stroke="#999" strokeWidth="2" /><circle cx="16" cy="14" r="7" fill="#5b82b0" /><circle cx="16" cy="14" r="3" fill="#222" /><path d="M26 28h11l-5.500 5z" fill="#444" /></g>,
  epsilon: <g><path d="M15 5Q10-1 5 2t4 8q-8 1-7 6 3 5 12 0" fill="none" stroke="#6a4a78" strokeWidth="3" /><path d="M18 32V20h12v12" fill="none" stroke="#999" strokeWidth="5" /></g>,
  remove: <g><path d="M1 1h25v26H1z" fill="#f4f4f4" stroke="#777" strokeWidth="2" /><rect x="19" y="21" width="13" height="10" rx="2" fill="#f4546a" /><path d="M22 26h7" stroke="#fff" strokeWidth="2" /></g>,
  folder: <Folder />,
  home: <g><Folder /><path d="M8 20l9-8 9 8M12 19v7h10v-7" fill="none" stroke="#333" strokeWidth="2" /></g>,
  opened: <g><path d="M0 0h16l3 4h13v5H19l-3-4H0z" fill="#8c8c8c" /><path d="M2 9v21h29V13H19l-3-4z" fill="#ececec" stroke="#8c8c8c" strokeWidth="2" /></g>,
  zip: <g><rect x="2" y="1" width="28" height="29" fill="#eee" stroke="#888" strokeWidth="2" /><path d="M12 1v28M20 1v28" stroke="#888" strokeWidth="1.500" /><path d="M16 2v18" stroke="#444" strokeWidth="5" strokeDasharray="2.500 2" /><rect x="13" y="20" width="6" height="8" fill="#fff" stroke="#444" strokeWidth="2" /></g>,
  qgis: <g><circle cx="15" cy="15" r="12.500" fill="none" stroke="#589632" strokeWidth="6.500" /><path d="M17 17h6l11 11v4h-6L17 22z" fill="#6fa52c" stroke="#fff" strokeWidth="1.200" /><circle cx="16" cy="16" r="3" fill="#ee7913" /></g>,
  shape: (
    <g fill="none" stroke="#999" strokeWidth="1.800">
      <path d="M4 28L15 4h13" />
      <path d="M14 26q-2-5 6-9 8-4 10 1 1 10-6 11-8 2-10-3z" fill="#e4e4e4" />
      <g fill="#fff"><circle cx="3" cy="5" r="2" /><circle cx="15" cy="4" r="2" /><circle cx="29" cy="4" r="2" /><circle cx="4" cy="28" r="2" /></g>
    </g>
  ),
  db: (
    <g fill="#4a78ab" stroke="#8ba9c9" strokeWidth="1.500">
      <path d="M4 5v22q12 8 24 0V5z" />
      <ellipse cx="16" cy="5" rx="12" ry="4" fill="#7fa3cc" />
      <path d="M4 12q12 7 24 0M4 19q12 7 24 0" fill="none" />
    </g>
  ),
  floatwin: <g fill="none" stroke="#666" strokeWidth="2.500"><rect x="2" y="2" width="28" height="28" rx="5" /><path d="M8 14h10v10H8zM14 13V8h10v10h-5" /></g>,
  close: <g fill="none" stroke="#666" strokeWidth="2.500"><rect x="2" y="2" width="28" height="28" rx="5" /><path d="M9 9l14 14M23 9L9 23" stroke="#555" strokeWidth="4.500" /></g>,
  search: <g fill="none" stroke="#999" strokeWidth="3"><circle cx="13" cy="13" r="10" /><path d="M20 20l10 10" strokeWidth="4" /></g>,
  mouse: (
    <g fill="none" stroke="#222" strokeWidth="1.800">
      <path d="M5 4l5-3 8 12-6 4-9-9zM8 3l6 10M1 22h10M26 4l-8 10" />
      <ellipse cx="18" cy="22" rx="8" ry="9" fill="#eee" />
      <path d="M12 20l12-5M15 25l7-4M29 2l2-1" />
    </g>
  ),
  lock: <g><path d="M8 15V9q0-7 8-7t8 7v6" fill="none" stroke="#999" strokeWidth="4" /><rect x="4" y="14" width="24" height="17" rx="3" fill="#666" /></g>,
};

const Svg = styled.svg<{ $size: number }>`
  width: ${(p) => p.$size}px;
  height: ${(p) => p.$size}px;
  flex: none;
  display: block;
  overflow: visible;
`;

const Icon = ({ name, size = 32 }: { name: string; size?: number }) => (
  <Svg $size={size} viewBox="0 0 32 32" aria-hidden="true">
    {ICONS[name]}
  </Svg>
);

const Triangle = styled.span<{ $dir: "up" | "down" | "left" | "right" }>`
  width: 0;
  height: 0;
  flex: none;
  border: 5px solid transparent;
  ${(p) => p.$dir === "down" && css`border-top: 6px solid #555; border-bottom: 0;`}
  ${(p) => p.$dir === "up" && css`border-bottom: 6px solid #555; border-top: 0;`}
  ${(p) => p.$dir === "right" && css`border-left: 6px solid #555; border-right: 0;`}
  ${(p) => p.$dir === "left" && css`border-right: 6px solid #555; border-left: 0;`}
`;

/* ------------------------------------------------------------------ */
/* Window frame                                                        */
/* ------------------------------------------------------------------ */

const Window = styled.div`
  position: relative;
  min-height: 100vh;
  display: flex;
  flex-direction: column;
  border: 4px solid #acacac;
  border-radius: 4px;
  background: #efefef;
  color: #111;
  font: 21px/28px "Noto Sans", "Open Sans", sans-serif;
  overflow: hidden;
`;

const TitleBar = styled.header`
  height: 55px;
  display: flex;
  align-items: center;
  justify-content: center;
  padding-left: 474px;
  background: #ebebeb;
  border-bottom: 2px solid #c3c3c3;
  color: #3d3d3d;
  font-weight: 700;
`;

const MenuBar = styled.nav`
  height: 32px;
  display: flex;
  gap: 10px;
  padding-left: 4px;
  border-bottom: 1px solid #d6d6d6;
`;

const MenuSlot = styled.div`
  position: relative;
`;

const MenuItem = styled.button<{ $open?: boolean }>`
  height: 31px;
  padding: 0 7px;
  white-space: nowrap;
  ${(p) => p.$open && css`background: #308cc6; color: #fff;`}

  u {
    text-decoration-thickness: 2px;
    text-underline-offset: 3px;
  }
`;

const Popup = styled.div`
  position: absolute;
  z-index: 2;
  top: 32px;
  left: 0;
  width: 350px;
  background: #308cc6;
  border: 1px solid #2a6a94;
`;

const PopupItem = styled.button`
  width: 100%;
  height: 35px;
  display: flex;
  align-items: center;
  gap: 8px;
  padding-left: 11px;
  color: #fff;
`;

const ToolBar = styled.div`
  height: 58px;
  display: flex;
  align-items: center;
  background: linear-gradient(#fafafa, #eeeeee);
  border-bottom: 1px solid #b5b5b5;
`;

const Grip = styled.span<{ $first?: boolean }>`
  width: ${(p) => (p.$first ? 14 : 24)}px;
  height: 26px;
  flex: none;
  display: flex;
  justify-content: center;

  &::before {
    content: "";
    width: 8px;
    background: radial-gradient(circle at 1px 1px, #bbb 1px, transparent 1px) 0 0 / 5px 5px;
  }
`;

const Separator = styled.span`
  width: 10px;
  height: 28px;
  flex: none;
  background: linear-gradient(#d4d4d4, #d4d4d4) center / 1px 100% no-repeat;
`;

const ToolButton = styled.button<{ $active?: boolean; $dim?: boolean }>`
  width: 47px;
  height: 46px;
  margin: 0 1px;
  flex: none;
  display: flex;
  align-items: center;
  justify-content: center;
  border: 1px solid transparent;
  border-radius: 3px;
  ${(p) => p.$active && css`background: #dadada; border-color: #b0b0b0;`}

  svg { opacity: ${(p) => (p.$dim ? 0.35 : 1)}; }
`;

const DropButton = styled.button<{ $dim?: boolean }>`
  width: 17px;
  height: 46px;
  flex: none;
  display: flex;
  align-items: center;
  justify-content: center;
  opacity: ${(p) => (p.$dim ? 0.35 : 1)};
`;

/* "|" grip, "/" separator, "v" drop arrow, "~" drop arrow disabled, "-" prefix disabled, "*" prefix pressed */
const ROW_1 =
  "| doc open save layout wrench style | *hand -move zoomin zoomout zoomfull -zoomsel zoomlayer -zoom11 zoomlast -zoomnext mapview bookmark bookmark panel clock refresh | select v form v deselect v selpin | info abacus gear sigma table v ruler v tip -action ~";
const ROW_2 =
  "| layers geopkg vector feather chip mesh / vmesh / | -pencils pencil -saveedit -blob -vertex ~ -multiedit -trash -cut -copy -paste -undo none | label diagram / labelpin labelred / -g1 -g2 -g3 -g4 -g5 | metasearch | python | help |";

const Tools = ({ spec, label }: { spec: string; label: string }) => (
  <ToolBar role="toolbar" aria-label={label}>
    {spec.split(" ").map((token, i) => {
      if (token === "|") return <Grip key={i} $first={i === 0} />;
      if (token === "/") return <Separator key={i} />;
      if (token === "v" || token === "~")
        return (
          <DropButton key={i} $dim={token === "~"} aria-label="Mais">
            <Triangle $dir="down" />
          </DropButton>
        );
      const name = token.replace(/^[-*]/, "");
      return (
        <ToolButton key={i} $dim={token[0] === "-"} $active={token[0] === "*"} aria-label={name}>
          <Icon name={name} />
        </ToolButton>
      );
    })}
  </ToolBar>
);

/* ------------------------------------------------------------------ */
/* Docks                                                               */
/* ------------------------------------------------------------------ */

const Main = styled.main`
  flex: 1;
  display: flex;
  min-height: 0;
`;

const Docks = styled.aside`
  width: 432px;
  flex: none;
  display: flex;
  flex-direction: column;
`;

const Splitter = styled.div<{ $vertical?: boolean }>`
  flex: none;
  display: flex;
  align-items: center;
  justify-content: center;
  ${(p) => (p.$vertical ? css`width: 10px;` : css`height: 10px;`)}

  &::before {
    content: "";
    width: ${(p) => (p.$vertical ? 2 : 25)}px;
    height: ${(p) => (p.$vertical ? 25 : 2)}px;
    background: radial-gradient(circle at 1px 1px, #b8b8b8 1px, transparent 1px) 0 0 / 4px 4px;
  }
`;

const DockHead = styled.div`
  height: 29px;
  display: flex;
  align-items: center;
  gap: 4px;
  padding: 0 3px;
`;

const DockTitle = styled.h2`
  flex: 1;
  margin: 0;
  font-size: 21px;
  line-height: 28px;
  font-weight: 400;
`;

const DockTools = styled.div`
  height: 46px;
  display: flex;
  align-items: center;
  padding: 0 0 4px 2px;
`;

const SmallButton = styled.button<{ $narrow?: boolean }>`
  width: ${(p) => (p.$narrow ? 17 : 37)}px;
  height: 36px;
  flex: none;
  display: flex;
  align-items: center;
  justify-content: center;
`;

const PlainButton = styled.button`
  display: flex;
`;

const TreeFrame = styled.div`
  height: 446px;
  flex: none;
  display: grid;
  grid-template: 1fr 21px / 1fr 21px;
  background: #fff;
  border: 1px solid #b4b4b4;
  border-left: 0;
`;

const Tree = styled.ul`
  margin: 0;
  padding: 0;
  list-style: none;
  display: grid;
  grid-auto-rows: 1fr;
`;

const TreeRow = styled.li<{ $level: number }>`
  display: flex;
  align-items: center;
  padding-left: ${(p) => p.$level * 24}px;
  white-space: nowrap;
`;

const Expander = styled.span`
  width: 20px;
  margin-right: 8px;
  display: flex;
  justify-content: center;
`;

const TreeText = styled.span`
  margin-left: 10px;
`;

const Scroll = styled.div<{ $horizontal?: boolean }>`
  display: flex;
  flex-direction: ${(p) => (p.$horizontal ? "row" : "column")};
  background: #e2e2e2;
  ${(p) => (p.$horizontal ? css`border-top: 1px solid #b4b4b4;` : css`border-left: 1px solid #b4b4b4;`)}
`;

const ScrollButton = styled.button`
  flex: 0 0 20px;
  display: flex;
  align-items: center;
  justify-content: center;
  background: #f8f8f8;
  outline: 1px solid #bebebe;
`;

const Thumb = styled.span<{ $length: number }>`
  flex: 0 0 ${(p) => p.$length}%;
  background: #fbfbfb;
  outline: 1px solid #bebebe;
`;

const Track = styled.span<{ $grow?: boolean }>`
  flex: ${(p) => (p.$grow ? "1" : "0 0 18px")};
`;

const Corner = styled.span`
  background: #efefef;
  border: solid #b4b4b4;
  border-width: 1px 0 0 1px;
`;

const LayerFrame = styled.ul`
  flex: 1;
  margin: 0;
  padding: 1px 0 0;
  list-style: none;
  background: #fff;
  border: 1px solid #b4b4b4;
  border-left: 0;
`;

const LayerRow = styled.li<{ $selected?: boolean }>`
  height: 28px;
  display: flex;
  align-items: center;
  padding-left: 33px;
  ${(p) => p.$selected && css`background: #308cc6;`}
`;

const LayerLabel = styled.label<{ $off?: boolean; $selected?: boolean }>`
  margin-left: 9px;
  color: #000;
  font-size: 22px;
  font-weight: 700;
  ${(p) => p.$off && css`color: #868686; font-style: italic;`}
  ${(p) => p.$selected && css`color: #fff; text-decoration: underline; text-decoration-thickness: 1px; text-underline-offset: 3px;`}
`;

const Check = styled.input`
  appearance: none;
  width: 20px;
  height: 20px;
  flex: none;
  display: flex;
  align-items: center;
  justify-content: center;
  background: #fff;
  border: 1px solid #b9b9b9;

  &:checked::before {
    content: "";
    width: 6px;
    height: 11px;
    border: solid #000;
    border-width: 0 3px 3px 0;
    transform: rotate(40deg) translate(-1px, -1px);
  }
`;

const Swatch = styled.span<{ $color: string; $point?: boolean }>`
  width: ${(p) => (p.$point ? 11 : 23)}px;
  height: ${(p) => (p.$point ? 11 : 23)}px;
  margin: 0 ${(p) => (p.$point ? 6 : 0)}px 0 ${(p) => (p.$point ? 15 : 9)}px;
  border: 1px solid #4a4f52;
  border-radius: ${(p) => (p.$point ? "50%" : 0)};
  background: ${(p) => p.$color};
`;

const TREE: { level: number; icon: string; text: string; open?: boolean; leaf?: boolean }[] = [
  { level: 0, icon: "home", text: "Início", open: true },
  { level: 1, icon: "folder", text: "@_jupyter_books" },
  { level: 1, icon: "folder", text: "@Delinea_2024" },
  { level: 1, icon: "folder", text: "@flood_RS_2023" },
  { level: 1, icon: "folder", text: "@pessoal" },
  { level: 1, icon: "opened", text: "@Shapefile", open: true },
  { level: 2, icon: "zip", text: "cap5_shapefile.zip" },
  { level: 2, icon: "qgis", text: "capitulo5" },
  { level: 2, icon: "shape", text: "censo_municipios.shp", leaf: true },
  { level: 2, icon: "shape", text: "estados_brasil.shp", leaf: true },
  { level: 2, icon: "shape", text: "regioes_brasil.shp", leaf: true },
  { level: 2, icon: "shape", text: "regioes_imediatas.shp", leaf: true },
  { level: 2, icon: "shape", text: "regioes_intermediarias.shp", leaf: true },
  { level: 1, icon: "folder", text: "_build" },
  { level: 1, icon: "folder", text: "anaconda3" },
];

const LAYERS: { name: string; color: string; on?: boolean; point?: boolean; selected?: boolean }[] = [
  { name: "capitais", color: "#b5ad90", on: true, point: true },
  { name: "estado", color: "#92abba", on: true },
  { name: "regiao", color: "#e6b532" },
  { name: "regiao_inter", color: "#e15989" },
  { name: "regiao_imed", color: "#74655f", selected: true },
  { name: "censo_mun", color: "#7b8b8d" },
];

const Head = ({ title }: { title: string }) => (
  <DockHead>
    <DockTitle>{title}</DockTitle>
    <PlainButton aria-label="Destacar">
      <Icon name="floatwin" size={17} />
    </PlainButton>
    <PlainButton aria-label="Fechar">
      <Icon name="close" size={17} />
    </PlainButton>
  </DockHead>
);

/* ------------------------------------------------------------------ */
/* Map canvas and status bar                                           */
/* ------------------------------------------------------------------ */

const Canvas = styled.section`
  flex: 1;
  min-width: 0;
  display: flex;
  background: #fff;
  border: 1px solid #b4b4b4;
  border-right: 0;
`;

const MapSvg = styled.svg`
  flex: 1;
  min-width: 0;
  height: calc(100vh - 257px);
`;

const Pointer = styled.svg`
  position: absolute;
  z-index: 3;
  left: 869px;
  top: 140px;
  width: 210px;
  height: 249px;
  pointer-events: none;
`;

const StatusBar = styled.footer`
  height: 44px;
  display: flex;
  align-items: center;
  padding: 0 7px 0 4px;
  font-size: 17px;
`;

const Locator = styled.label`
  width: 533px;
  height: 36px;
  display: flex;
  align-items: center;
  gap: 11px;
  padding: 0 12px;
  margin-right: auto;
  background: #fff;
  border: 1px solid #aaa;
  border-radius: 4px;
  font-size: 21px;

  input {
    flex: 1;
    min-width: 0;
    padding: 0;
    border: 0;
    background: none;
    outline: 0;
  }
  input::placeholder { color: #868686; opacity: 1; }
`;

const Field = styled.span<{ $width: number; $gap: number }>`
  width: ${(p) => p.$width}px;
  height: 35px;
  margin: 0 ${(p) => p.$gap}px 0 6px;
  display: flex;
  align-items: stretch;
  background: #fff;
  border: 1px solid #aaa;
  border-radius: 3px;
  overflow: hidden;

  input, select {
    flex: 1;
    width: 100%;
    min-width: 0;
    padding: 0 6px;
    border: 0;
    background: none;
    appearance: none;
    outline: 0;
  }
`;

const CenteredInput = styled.input`
  text-align: center;
`;

const ComboArrow = styled.span`
  width: 28px;
  flex: none;
  display: flex;
  align-items: center;
  justify-content: center;
  background: #f4f4f4;
  border-left: 1px solid #c0c0c0;
`;

const Spin = styled.span`
  width: 20px;
  flex: none;
  display: flex;
  flex-direction: column;
  align-items: center;
  justify-content: space-evenly;
  border-left: 1px solid #c0c0c0;

  button { display: flex; }
`;

const IconGap = styled.span<{ $gap: number }>`
  margin-right: ${(p) => p.$gap}px;
  display: flex;
`;

const MENUS: [string, string, string][] = [
  ["Pro", "j", "eto"],
  ["", "E", "ditar"],
  ["", "E", "xibir"],
  ["", "C", "amada"],
  ["", "C", "onfigurações"],
  ["", "C", "omplementos"],
  ["Vet", "o", "r"],
  ["", "R", "aster"],
  ["", "B", "anco de Dados"],
  ["", "W", "eb"],
  ["", "M", "alha"],
  ["Pro", "c", "essamento"],
  ["", "A", "juda"],
];

export default function App() {
  return (
    <>
      <GlobalStyle />
      <Window>
        <TitleBar>*capitulo5 — QGIS</TitleBar>
        <MenuBar>
          {MENUS.map(([before, key, after]) => {
            const open = key === "B";
            return (
              <MenuSlot key={before + key + after}>
                <MenuItem $open={open} aria-expanded={open}>
                  {before}
                  <u>{key}</u>
                  {after}
                </MenuItem>
                {open && (
                  <Popup>
                    <PopupItem>
                      <Icon name="db" size={22} />
                      Gerenciador de BD...
                    </PopupItem>
                  </Popup>
                )}
              </MenuSlot>
            );
          })}
        </MenuBar>
        <Tools spec={ROW_1} label="Projeto e navegação" />
        <Tools spec={ROW_2} label="Camadas e edição" />

        <Main>
          <Docks>
            <Head title="Navegador" />
            <DockTools>
              {["addlayer", "sync", "funnel", "collapse", "infosm"].map((n) => (
                <SmallButton key={n} aria-label={n}>
                  <Icon name={n} size={21} />
                </SmallButton>
              ))}
            </DockTools>
            <TreeFrame>
              <Tree>
                {TREE.map((row) => (
                  <TreeRow key={row.text} $level={row.level}>
                    <Expander>{!row.leaf && <Triangle $dir={row.open ? "down" : "right"} />}</Expander>
                    <Icon name={row.icon} size={21} />
                    <TreeText>{row.text}</TreeText>
                  </TreeRow>
                ))}
              </Tree>
              <Scroll>
                <ScrollButton aria-label="Subir"><Triangle $dir="up" /></ScrollButton>
                <Track />
                <Thumb $length={22} />
                <Track $grow />
                <ScrollButton aria-label="Descer"><Triangle $dir="down" /></ScrollButton>
              </Scroll>
              <Scroll $horizontal>
                <ScrollButton aria-label="Esquerda"><Triangle $dir="left" /></ScrollButton>
                <Thumb $length={68} />
                <Track $grow />
                <ScrollButton aria-label="Direita"><Triangle $dir="right" /></ScrollButton>
              </Scroll>
              <Corner />
            </TreeFrame>
            <Splitter />
            <Head title="Camadas" />
            <DockTools>
              {["brush", "group", "eye", "funnelmenu", "epsilon"].map((n) => (
                <SmallButton key={n} aria-label={n}>
                  <Icon name={n} size={21} />
                </SmallButton>
              ))}
              <SmallButton $narrow aria-label="Mais">
                <Triangle $dir="down" />
              </SmallButton>
              {["expand", "collapse", "remove"].map((n) => (
                <SmallButton key={n} aria-label={n}>
                  <Icon name={n} size={21} />
                </SmallButton>
              ))}
            </DockTools>
            <LayerFrame>
              {LAYERS.map((l) => (
                <LayerRow key={l.name} $selected={l.selected}>
                  <Check type="checkbox" id={l.name} defaultChecked={l.on} />
                  <Swatch $color={l.color} $point={l.point} />
                  <LayerLabel htmlFor={l.name} $off={!l.on} $selected={l.selected}>
                    {l.name}
                  </LayerLabel>
                </LayerRow>
              ))}
            </LayerFrame>
          </Docks>
          <Splitter $vertical />
          <Canvas>
            <MapSvg viewBox="447 208 1818 1310" role="img" aria-label="Mapa do Brasil">
              <path d={outline} fill="#92abba" stroke="#3a4144" strokeWidth="1.5" strokeLinejoin="round" />
              <path d={lagoon} fill="#fff" stroke="#232b30" strokeWidth="1.5" />
              <g fill="none" stroke="#232b30" strokeWidth="1.5" strokeLinejoin="round">
                {borders.map((d, i) => (
                  <path key={i} d={d} />
                ))}
                {mangroves.map((d, i) => (
                  <path key={i} d={d} />
                ))}
                <path d={federalDistrict} />
              </g>
              {islets.map(([x, y], i) => (
                <circle key={i} cx={x} cy={y} r="1.2" fill="#444" />
              ))}
              {capitals.map(([x, y], i) => (
                <circle key={i} cx={x} cy={y} r="5.5" fill="#c6b694" stroke="#2c2c28" strokeWidth="1.5" />
              ))}
            </MapSvg>
          </Canvas>
        </Main>

        <StatusBar>
          <Locator>
            <Icon name="search" size={19} />
            <input placeholder="Escreva para localizar (Ctrl+K)" aria-label="Localizar" />
          </Locator>
          <label htmlFor="coord">Coordenada</label>
          <Field $width={120} $gap={8}>
            <CenteredInput id="coord" defaultValue="-66,73 6,43" />
          </Field>
          <IconGap $gap={18}>
            <Icon name="mouse" size={24} />
          </IconGap>
          <label htmlFor="scale">Escala</label>
          <Field $width={142} $gap={16}>
            <select id="scale">
              <option>1:16415442</option>
            </select>
            <ComboArrow>
              <Triangle $dir="down" />
            </ComboArrow>
          </Field>
          <IconGap $gap={12}>
            <Icon name="lock" size={22} />
          </IconGap>
          <label htmlFor="lens">Lupa</label>
          <Field $width={137} $gap={16}>
            <input id="lens" defaultValue="100%" />
            <Spin>
              <button aria-label="Aumentar"><Triangle $dir="up" /></button>
              <button aria-label="Diminuir"><Triangle $dir="down" /></button>
            </Spin>
          </Field>
          <span>Rotação</span>
        </StatusBar>

        <Pointer viewBox="0 0 210 249" aria-hidden="true">
          <path d="M105 0l105 106h-52v143H54V106H0z" fill="#f00" />
        </Pointer>
      </Window>
    </>
  );
}
